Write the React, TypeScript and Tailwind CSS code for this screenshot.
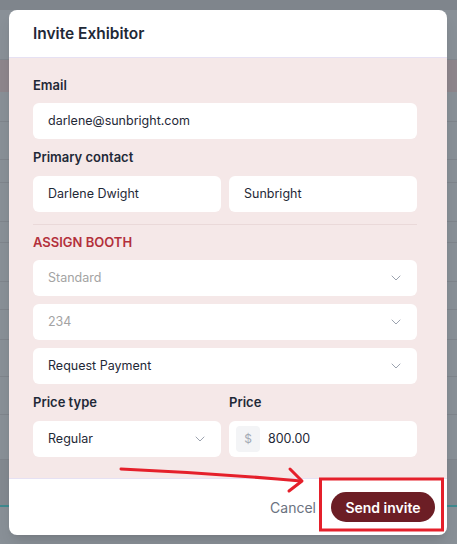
import { ChevronDown } from 'lucide-react'

const font = { fontFamily: 'Inter, "Noto Sans", sans-serif' }

function Label({ children, className = '' }: { children: React.ReactNode; className?: string }) {
  return <p className={`h-4 text-[13px] leading-4 font-semibold text-[#1f2937] ${className}`}>{children}</p>
}

function Field({ value, muted = false, select = false }: { value: string; muted?: boolean; select?: boolean }) {
  return (
    <div className="flex h-9 items-center justify-between rounded-md bg-white pl-[15px] pr-[13px]">
      <span className={`text-[12.5px] ${muted ? 'text-[#a3a3a3]' : 'text-[#1f2937]'}`}>{value}</span>
      {select && <ChevronDown size={16} strokeWidth={1.5} className="text-[#9ca3af]" />}
    </div>
  )
}

export default function App() {
  return (
    <div className="relative h-[544px] w-[457px] overflow-hidden bg-[#899097]" style={font}>
      {/* page behind the overlay */}
      <div className="h-[10px] bg-[#7f858c]" />
      <div className="h-[50px] border-b border-[#80868d]" />
      <div className="h-[32px] bg-[#8e868c]" />
      <div className="h-[30px] border-b border-[#7f858c]" />
      <div className="h-[38px] border-b border-[#7f858c]" />
      <div className="h-[23px] border-b border-[#7f858c]" />
      <div className="h-[39px] border-b border-[#7f858c]" />
      <div className="h-[21px] border-b border-[#7f858c]" />
      <div className="h-[39px] border-b border-[#7f858c]" />
      <div className="h-[28px] border-b border-[#7f858c]" />
      <div className="h-[30px] border-b border-[#7f858c]" />
      <div className="h-[37px] border-b border-[#7f858c]" />
      <div className="h-[38px] border-b border-[#7f858c]" />
      <div className="h-[45px] border-b border-[#7f858c]" />
      <div className="h-[45px] bg-[#838990]" />
      <div className="h-[2px] bg-[#3f8a8f]" />

      {/* modal */}
      <div className="absolute left-[9px] top-[10px] w-[438px] overflow-hidden rounded-lg bg-white shadow-lg">
        <div className="flex h-[48px] items-center border-b border-[#e6e1f3] px-6">
          <h2 className="text-[15.5px] font-semibold text-[#1f2937]">Invite Exhibitor</h2>
        </div>

        <div className="bg-[#f5e8e8] pb-[21px] pl-6 pr-[30px] pt-[19px]">
          <Label className="mb-[10px]">Email</Label>
          <Field value="darlene@sunbright.com" />

          <Label className="mb-[11px] mt-[10px]">Primary contact</Label>
          <div className="grid grid-cols-2 gap-2">
            <Field value="Darlene Dwight" />
            <Field value="Sunbright" />
          </div>

          <div className="mb-[9px] mt-[12px] h-px bg-[#ead9d9]" />

          <p className="mb-[10px] h-4 text-[13px] leading-4 font-semibold uppercase text-[#b3303b]">Assign Booth</p>
          <div className="flex flex-col gap-2">
            <Field value="Standard" muted select />
            <Field value="234" muted select />
            <Field value="Request Payment" select />
          </div>

          <div className="mt-[10px] grid grid-cols-2 gap-2">
            <div>
              <Label className="mb-[11px]">Price type</Label>
              <Field value="Regular" select />
            </div>
            <div>
              <Label className="mb-[11px]">Price</Label>
              <div className="flex h-9 items-center rounded-md bg-white pl-[7px]">
                <span className="flex h-[26px] w-6 items-center justify-center rounded bg-[#f3f4f6] text-[12px] text-[#a3aab5]">$</span>
                <span className="ml-2 text-[12.5px] text-[#1f2937]">800.00</span>
              </div>
            </div>
          </div>
        </div>

        <div className="flex h-[57px] items-center justify-end gap-[15px] border-t border-[#e6e1f3] pr-3">
          <button type="button" className="text-[14px] text-[#6b7280]">Cancel</button>
          <button type="button" className="h-[30px] w-[104px] rounded-full bg-[#6c1e25] text-[14px] font-semibold text-white">
            Send invite
          </button>
        </div>
      </div>

      {/* annotation */}
      <svg className="pointer-events-none absolute inset-0" width="457" height="544" viewBox="0 0 457 544">
        <path d="M121 469 Q210 473 301 481" fill="none" stroke="#e5202b" strokeWidth="3" strokeLinecap="round" />
        <path d="M290 469 L302 481 L289 491" fill="none" stroke="#e5202b" strokeWidth="3" strokeLinecap="round" strokeLinejoin="round" />
        <rect x="320.5" y="479" width="122" height="51" fill="none" stroke="#e5202b" strokeWidth="3" />
      </svg>
    </div>
  )
}
